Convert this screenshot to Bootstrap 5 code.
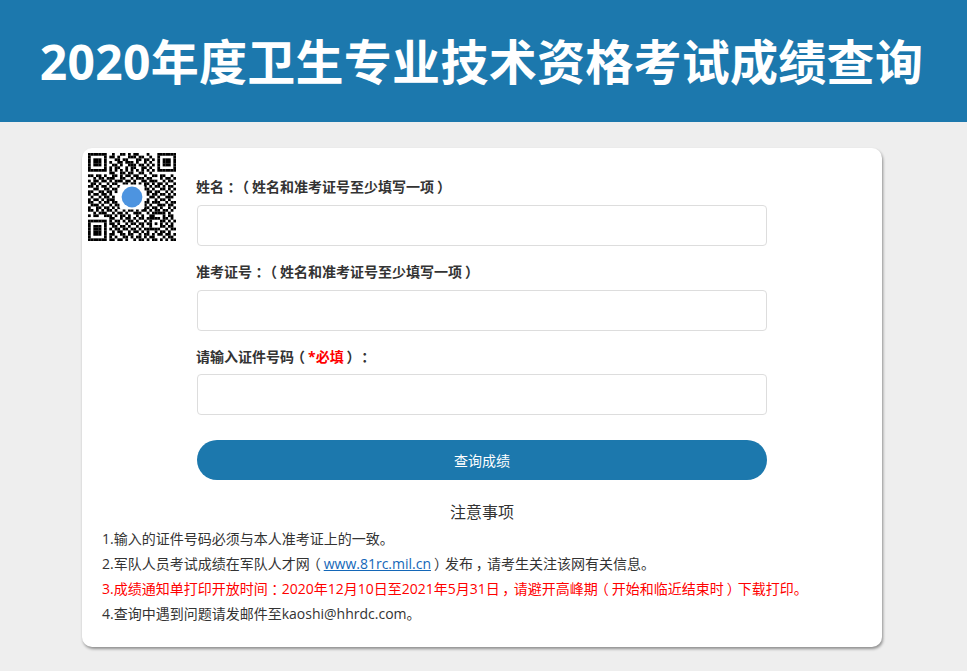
<!DOCTYPE html>
<html lang="zh-CN">
<head>
<meta charset="utf-8">
<title>成绩查询</title>
<link href="https://cdn.jsdelivr.net/npm/bootstrap@5.3.0/dist/css/bootstrap.min.css" rel="stylesheet">
<style>
html,body{height:100%}
body{background:#eee;font-family:"Open Sans","Noto Sans CJK SC",sans-serif;color:#333;font-size:14px;overflow:hidden}
.hero{background:#1c78ad;height:122px;color:#fff;padding:2px 4px 0 0}
.hero h1{font-size:48px;font-weight:700;margin:0;line-height:1;letter-spacing:.28px}
.panel{width:800px;height:499px;margin:26px 0 0 82px;background:#fff;border-radius:10px;box-shadow:1px 2px 3px rgba(0,0,0,.4);padding:0 6px;position:relative}
.qr{width:88px;height:88px;display:block;position:absolute;left:6px;top:5px;filter:blur(.35px)}
.formcol{width:570px;margin-left:109px;padding-top:29px}
.fld{font-weight:700;font-size:14px;line-height:20px;margin:0 0 8px -1px;color:#333;display:block}
.fld.tight{margin-bottom:7px}
.box{display:block;width:570px;height:41px;border:1px solid #ddd;border-radius:4px;margin-bottom:16px;box-shadow:none}
.must{color:#f00}
.go{width:570px;height:40px;border-radius:20px;background:#1c78ad;border:0;color:#fff;font-size:14px;margin-top:9px}
.go:hover{background:#1c78ad;color:#fff}
.nt{text-align:center;font-size:16px;line-height:22px;margin:21px 0 3px;color:#333}
.items{list-style:none;margin:0;padding:0 0 0 14px;font-size:14px;line-height:25px}
.items a{color:#1467b8}
.red{color:#f00}
.pn{display:inline-block;width:14px;text-align:center;font-feature-settings:"palt";line-height:1}
</style>
</head>
<body>
<header class="hero d-flex align-items-center justify-content-center"><h1>2020年度卫生专业技术资格考试成绩查询</h1></header>
<main class="panel">
<svg class="qr" id="qr" viewBox="0 0 33 33" aria-label="二维码"></svg>
<form class="formcol">
<label class="fld">姓名<span class="pn">：</span><span class="pn">（</span>姓名和准考证号至少填写一项<span class="pn">）</span></label>
<input class="form-control box" type="text">
<label class="fld">准考证号<span class="pn">：</span><span class="pn">（</span>姓名和准考证号至少填写一项<span class="pn">）</span></label>
<input class="form-control box" type="text">
<label class="fld tight">请输入证件号码<span class="pn">（</span><span class="must">*必填</span><span class="pn">）</span><span class="pn">：</span></label>
<input class="form-control box" type="text">
<button type="button" class="btn go">查询成绩</button>
</form>
<div class="nt">注意事项</div>
<ul class="items">
<li>1.输入的证件号码必须与本人准考证上的一致。</li>
<li>2.军队人员考试成绩在军队人才网<span class="pn">（</span><a href="#">www.81rc.mil.cn</a><span class="pn">）</span>发布<span class="pn">，</span>请考生关注该网有关信息。</li>
<li class="red">3.成绩通知单打印开放时间<span class="pn">：</span>2020年12月10日至2021年5月31日<span class="pn">，</span>请避开高峰期<span class="pn">（</span>开始和临近结束时<span class="pn">）</span>下载打印。</li>
<li>4.查询中遇到问题请发邮件至kaoshi@hhrdc.com。</li>
</ul>
</main>
<script>
(function(){
var rows=[
"111111100100110101100010001111111",
"100000101101000111011001001000001",
"101110100011011000110110101011101",
"101110101001101110100101001011101",
"101110100110100111011010101011101",
"100000101011001011001101001000001",
"111111101010101010101010101111111",
"000000001100110110011001000000000",
"110110100110101101100100110110010",
"001011011100110010111011000101101",
"101101101011101101001101110010110",
"011010010110011011010110101101001",
"110101101001100000001101011010110",
"001100110110000000000110100110101",
"110011011010000000000011011001010",
"101101101000000000000010110110101",
"010010110100000000000001101001110",
"101101011100000000000010010110100",
"110010110110000000000110111001011",
"011101001011000000001101001110110",
"100110110101101011010110110100101",
"110101011010010110101101011011010",
"001011100101101001110010111110100",
"101100111010110100101001100010110",
"000000001100101101011011111011010",
"111111101011010110100101000110101",
"100000101101001011011011010101010",
"101110100110110100101001000110110",
"101110101011011011010111111001011",
"101110100101100101101010010110100",
"101110101100110110010110101101101",
"100000101010011010110101100010110",
"111111101101101001011010110101011"];
var g='';
rows.forEach(function(row,y){row.split('').forEach(function(c,x){
 if(c==='1')g+='<rect x="'+x+'" y="'+y+'" width="1.03" height="1.03"/>';
});});
g+='<rect x="11.8" y="11.8" width="9.4" height="9.4" rx="1" fill="#fff"/><circle cx="16.5" cy="16.5" r="3.9" fill="#4d94e0"/>';
document.getElementById('qr').innerHTML=g;
})();
</script>
<script src="https://cdn.jsdelivr.net/npm/bootstrap@5.3.0/dist/js/bootstrap.bundle.min.js"></script>
</body>
</html>
